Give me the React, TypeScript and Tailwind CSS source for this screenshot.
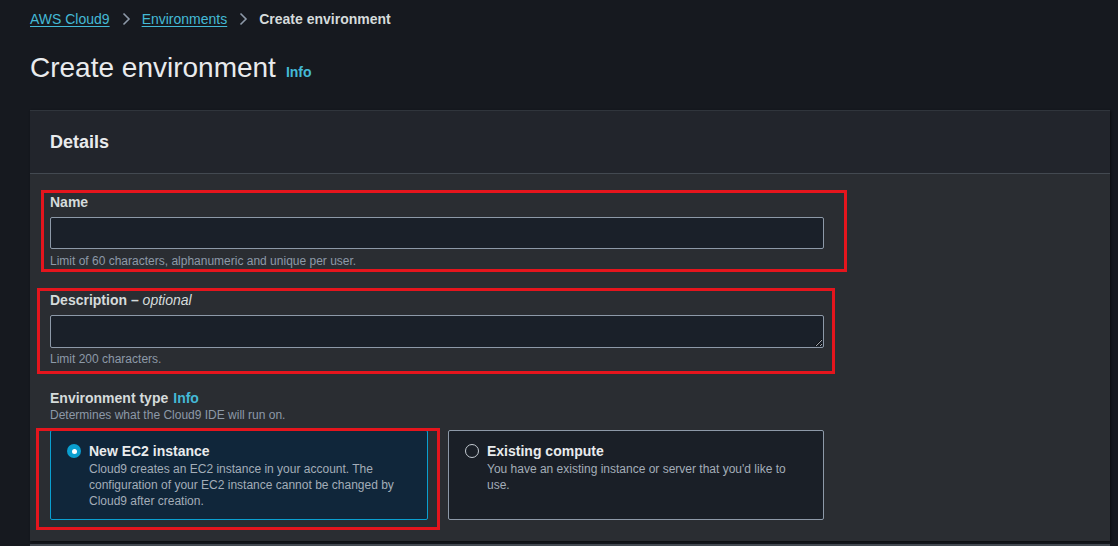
import React from "react";

const Chevron = () => (
  <svg width="10" height="14" viewBox="0 0 10 14" fill="none" className="shrink-0">
    <path d="M2.5 1.5 L8 7 L2.5 12.5" stroke="#8d99a8" strokeWidth="1.6" />
  </svg>
);

// red annotation frame drawn over a field
const Mark = ({ className }: { className: string }) => (
  <div className={`pointer-events-none absolute border-[3px] border-[#e5151d] ${className}`} />
);

const App = () => {
  return (
    <div className="min-h-screen bg-[#16191f] pl-[30px] font-['Liberation_Sans',Arial,sans-serif] text-[#d5dbdb]">
      {/* breadcrumb */}
      <nav className="flex items-center gap-[11px] pt-[10px] text-[14px] leading-[18px]">
        <a className="text-[#44b9d6] underline underline-offset-2">AWS Cloud9</a>
        <Chevron />
        <a className="text-[#44b9d6] underline underline-offset-2">Environments</a>
        <Chevron />
        <span className="font-bold text-[#d5dbdb]">Create environment</span>
      </nav>

      {/* title */}
      <div className="mt-[23px] flex items-baseline gap-[10px]">
        <h1 className="text-[28px] leading-[34px] text-[#e9ebed]">Create environment</h1>
        <span className="text-[14px] font-bold text-[#44b9d6]">Info</span>
      </div>

      {/* card */}
      <div className="mt-[25px] w-[1080px] border-t border-[#30353c] bg-[#2a2d32] shadow-[1px_1px_2px_#0b0d10]">
        <div className="flex h-[63px] items-center border-b border-[#434951] bg-[#22252c] px-[20px]">
          <h2 className="text-[18px] font-bold text-[#e9ebed]">Details</h2>
        </div>

        <div className="flex flex-col px-[20px] pb-[21px] pt-[18px]">
          {/* name */}
          <div className="relative w-[774px]">
            <Mark className="-left-[9px] -top-[2px] h-[82px] w-[806px]" />
            <label className="block text-[14px] font-bold leading-[20px]">Name</label>
            <input className="mt-[5px] block h-[32px] w-full rounded-[2px] border border-[#8d99a8] bg-[#1a2029] px-2 text-[14px] outline-none" />
            <p className="mt-[4px] text-[12px] leading-[16px] text-[#8d99a8]">
              Limit of 60 characters, alphanumeric and unique per user.
            </p>
          </div>

          {/* description */}
          <div className="relative mt-[21px] w-[774px]">
            <Mark className="-left-[13px] -top-[2px] h-[86px] w-[798px]" />
            <label className="block text-[14px] font-bold leading-[20px]">
              Description – <i className="font-normal">optional</i>
            </label>
            <textarea className="mt-[5px] block h-[33px] w-full rounded-[2px] border border-[#8d99a8] bg-[#1a2029] px-2 text-[14px] outline-none" />
            <p className="mt-[3px] text-[12px] leading-[16px] text-[#8d99a8]">Limit 200 characters.</p>
          </div>

          {/* environment type */}
          <div className="mt-[22px] w-[774px]">
            <div className="flex items-baseline gap-[5px] text-[14px] leading-[18px]">
              <span className="font-bold">Environment type</span>
              <span className="font-bold text-[#44b9d6]">Info</span>
            </div>
            <p className="text-[12px] leading-[16px] text-[#8d99a8]">Determines what the Cloud9 IDE will run on.</p>

            <div className="mt-[7px] grid grid-cols-[378px_376px] gap-[20px]">
              <div className="relative h-[90px] rounded-[2px] border border-[#0a9fd0] bg-[#10263a] pl-[16px] pr-[16px] pt-[10px]">
                <Mark className="-left-[15px] -top-[3px] h-[102px] w-[404px]" />
                <div className="flex gap-[8px]">
                  <span className="mt-[3px] flex h-[14px] w-[14px] shrink-0 items-center justify-center rounded-full bg-[#0a9fd0]">
                    <span className="h-[5px] w-[5px] rounded-full bg-white" />
                  </span>
                  <div>
                    <div className="text-[14px] font-bold leading-[20px] text-[#e9ebed]">New EC2 instance</div>
                    <p className="text-[12px] leading-[16px] text-[#a3adb8]">
                      Cloud9 creates an EC2 instance in your account. The configuration of your EC2 instance cannot be
                      changed by Cloud9 after creation.
                    </p>
                  </div>
                </div>
              </div>

              <div className="h-[90px] rounded-[2px] border border-[#8d99a8] bg-[#1a1f27] pl-[16px] pr-[16px] pt-[10px]">
                <div className="flex gap-[8px]">
                  <span className="mt-[3px] h-[14px] w-[14px] shrink-0 rounded-full border-[1.5px] border-[#c4cbd2]" />
                  <div>
                    <div className="text-[14px] font-bold leading-[20px] text-[#e9ebed]">Existing compute</div>
                    <p className="text-[12px] leading-[16px] text-[#a3adb8]">
                      You have an existing instance or server that you'd like to use.
                    </p>
                  </div>
                </div>
              </div>
            </div>
          </div>
        </div>
      </div>

      {/* next card edge */}
      <div className="mt-[3px] h-[10px] w-[1080px] border-t-2 border-[#434951] bg-[#22252c]" />
    </div>
  );
};

export default App;
